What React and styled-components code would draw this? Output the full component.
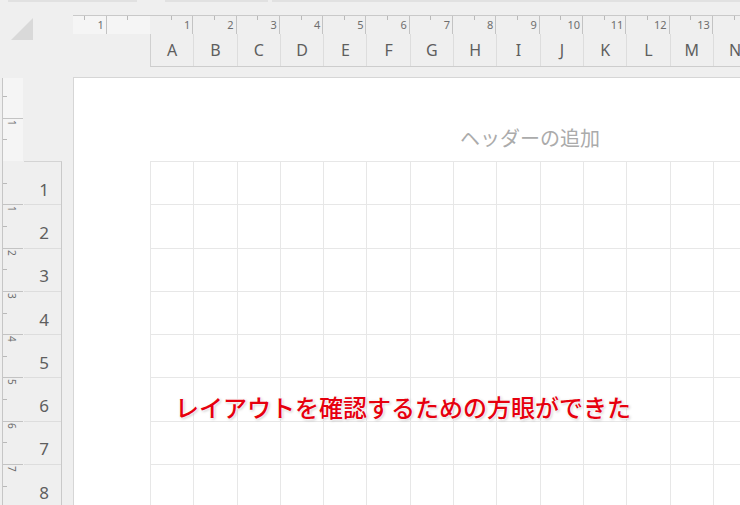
import React from "react";
import styled, { createGlobalStyle } from "styled-components";

const GlobalStyle = createGlobalStyle`
  html, body { margin: 0; padding: 0; background: #efefef; }
  body { font-family: "Noto Sans", "Liberation Sans", sans-serif; }
  * { box-sizing: border-box; }
`;

const CELL = 43.3;
const columns = "ABCDEFGHIJKLMN".split("");
const rows = [1, 2, 3, 4, 5, 6, 7, 8];

const Screen = styled.div`
  width: 740px;
  height: 505px;
  overflow: hidden;
  background: #efefef;
  display: flex;
  flex-direction: column;
`;

const TopStrip = styled.div`
  height: 15px;
  flex-shrink: 0;
  display: flex;
  align-items: flex-start;
`;

const Tab = styled.div`
  height: 2px;
  flex-shrink: 0;
  background: #e1e1e1;
  margin-left: ${p => p.$gap}px;
  width: ${p => p.$w}px;
`;

const HeadRow = styled.div`
  display: flex;
  height: 62px;
  flex-shrink: 0;
`;

const Corner = styled.div`
  width: 73px;
  flex-shrink: 0;
  padding: 3px 0 0 11px;
`;

const Triangle = styled.div`
  width: 22px;
  height: 22px;
  background: #d9d9d9;
  clip-path: polygon(100% 0, 100% 100%, 0 100%);
`;

const HeadRight = styled.div`
  flex: 1;
  min-width: 0;
  overflow: hidden;
  display: flex;
  flex-direction: column;
`;

const Ruler = styled.div`
  height: 19px;
  display: flex;
  border-top: 1px solid #c9c9c9;
`;

const MarginRuler = styled.div`
  width: 77px;
  flex-shrink: 0;
  display: flex;
  justify-content: flex-end;
  overflow: hidden;
  background: #f5f5f5;
`;

const RulerCell = styled.div`
  width: ${CELL}px;
  flex-shrink: 0;
  height: 100%;
  border-right: 1px solid ${p => (p.$line ? "#c3c3c3" : "transparent")};
  background: linear-gradient(#b9b9b9, #b9b9b9) no-repeat 50% 0 / 1px 4px;
  text-align: right;
  padding: 2px 2px 0 0;
  font-size: 11px;
  line-height: 13px;
  color: #6e6e6e;
`;

const ColHeaderRow = styled.div`
  display: flex;
  height: 33px;
  margin-left: 77px;
  border-left: 1px solid #d0d0d0;
  border-bottom: 1px solid #cdcdcd;
`;

const ColCell = styled.div`
  width: ${CELL}px;
  flex-shrink: 0;
  display: flex;
  align-items: center;
  justify-content: center;
  border-right: 1px solid #dddddd;
  font-size: 16px;
  color: #5e5e5e;
`;

const Body = styled.div`
  flex: 1;
  min-height: 0;
  display: flex;
`;

const SideRuler = styled.div`
  width: 22px;
  flex-shrink: 0;
  margin: 1px 0 0 2px;
  border-left: 1px solid #c6c6c6;
  display: flex;
  flex-direction: column;
`;

const SideMargin = styled.div`
  height: 83px;
  flex-shrink: 0;
  display: flex;
  flex-direction: column;
  justify-content: flex-end;
  overflow: hidden;
  background: #f5f5f5;
  width: 20px;
`;

const SideCell = styled.div`
  height: ${CELL}px;
  flex-shrink: 0;
  border-top: 1px solid ${p => (p.$line ? "#c3c3c3" : "transparent")};
  background: linear-gradient(#b9b9b9, #b9b9b9) no-repeat 0 50% / 4px 1px;
  padding: 1px 0 0 3px;
  width: 20px;
`;

const SideLabel = styled.span`
  display: block;
  writing-mode: vertical-rl;
  font-size: 10px;
  line-height: 11px;
  color: #6e6e6e;
`;

const RowHeaderCol = styled.div`
  width: 38px;
  flex-shrink: 0;
  padding-top: 84px;
`;

const RowList = styled.div`
  border-top: 1px solid #d4d4d4;
  border-right: 1px solid #c9c9c9;
  height: 100%;
`;

const RowCell = styled.div`
  height: ${CELL}px;
  border-bottom: 1px solid #dddddd;
  display: flex;
  align-items: center;
  justify-content: flex-end;
  padding: 12px 12px 0 0;
  font-size: 17px;
  color: #5e5e5e;
`;

const Gutter = styled.div`
  width: 11px;
  flex-shrink: 0;
`;

const Page = styled.div`
  flex: 1;
  min-width: 0;
  position: relative;
  overflow: hidden;
  background: #ffffff;
  border-left: 1px solid #d6d6d6;
  border-top: 1px solid #d6d6d6;
`;

const HeaderZone = styled.div`
  height: 83px;
  padding: 48px 0 0 386px;
  font-family: "Noto Sans CJK JP", "Noto Sans", sans-serif;
  font-size: 20px;
  line-height: 24px;
  color: #ababab;
  white-space: nowrap;
`;

const Grid = styled.div`
  margin-left: 76px;
  display: grid;
  grid-template-columns: repeat(14, ${CELL}px);
  grid-auto-rows: ${CELL}px;
  border-top: 1px solid #e7e7e7;
  border-left: 1px solid #e7e7e7;
  width: max-content;
`;

const GridCell = styled.div`
  border-right: 1px solid #e7e7e7;
  border-bottom: 1px solid #e7e7e7;
`;

const Note = styled.div`
  position: absolute;
  left: 101px;
  top: 317px;
  font-family: "Noto Sans CJK JP", "Noto Sans", sans-serif;
  font-size: 24px;
  line-height: 1;
  font-weight: 500;
  color: #e6000e;
  white-space: nowrap;
  text-shadow: 0 0 2px #fff, 0 0 2px #fff, 0 0 3px #fff, 1px 1px 3px rgba(0, 0, 0, 0.3);
`;

export default function App() {
  return (
    <Screen>
      <GlobalStyle />
      <TopStrip>
        <Tab $gap={8} $w={129} />
        <Tab $gap={28} $w={103} />
        <Tab $gap={4} $w={480} />
      </TopStrip>
      <HeadRow>
        <Corner>
          <Triangle />
        </Corner>
        <HeadRight>
          <Ruler>
            <MarginRuler>
              <RulerCell $line>1</RulerCell>
              <RulerCell />
            </MarginRuler>
            {Array.from({ length: 14 }, (_, i) => (
              <RulerCell key={i} $line>{i < 13 ? i + 1 : ""}</RulerCell>
            ))}
          </Ruler>
          <ColHeaderRow>
            {columns.map(c => (
              <ColCell key={c}>{c}</ColCell>
            ))}
          </ColHeaderRow>
        </HeadRight>
      </HeadRow>
      <Body>
        <SideRuler>
          <SideMargin>
            <SideCell />
            <SideCell $line>
              <SideLabel>1</SideLabel>
            </SideCell>
          </SideMargin>
          <SideCell />
          {[1, 2, 3, 4, 5, 6, 7].map(n => (
            <SideCell key={n} $line>
              <SideLabel>{n}</SideLabel>
            </SideCell>
          ))}
        </SideRuler>
        <RowHeaderCol>
          <RowList>
            {rows.map(r => (
              <RowCell key={r}>{r}</RowCell>
            ))}
          </RowList>
        </RowHeaderCol>
        <Gutter />
        <Page>
          <HeaderZone>ヘッダーの追加</HeaderZone>
          <Grid>
            {Array.from({ length: 14 * 8 }, (_, i) => (
              <GridCell key={i} />
            ))}
          </Grid>
          <Note>レイアウトを確認するための方眼ができた</Note>
        </Page>
      </Body>
    </Screen>
  );
}
